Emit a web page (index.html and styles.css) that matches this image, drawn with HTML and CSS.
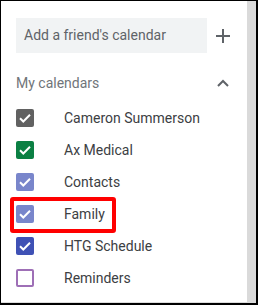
FILE: index.html
```html
<!DOCTYPE html>
<html lang="en">

<head>
    <meta charset="UTF-8" />
    <meta name="viewport" content="width=device-width, initial-scale=1.0" />
    <title>Calendars</title>
    <link rel="stylesheet" href="styles.css">
</head>

<body>
    <div class="frame">
        <div class="panel">
            <div class="search-row">
                <div class="search-box">Add a friend's calendar</div>
                <span class="icon-btn">
                    <svg width="14" height="14" viewBox="0 0 14 14">
                        <path d="M7 0v14M0 7h14" stroke="#5f6368" stroke-width="2" fill="none" />
                    </svg>
                </span>
            </div>
            <div class="section-head">
                <span class="section-title">My calendars</span>
                <span class="icon-btn">
                    <svg width="12" height="8" viewBox="0 0 12 8">
                        <path d="M1 7l5-5 5 5" stroke="#5f6368" stroke-width="2" fill="none" />
                    </svg>
                </span>
            </div>
            <ul class="cal-list">
                <li><span class="box" style="background:#616161"><svg class="tick" viewBox="0 0 18 18"><path d="M4 9.2l3.3 3.3L14 5.8" /></svg></span>Cameron Summerson</li>
                <li><span class="box" style="background:#0b8043"><svg class="tick" viewBox="0 0 18 18"><path d="M4 9.2l3.3 3.3L14 5.8" /></svg></span>Ax Medical</li>
                <li><span class="box" style="background:#7986cb"><svg class="tick" viewBox="0 0 18 18"><path d="M4 9.2l3.3 3.3L14 5.8" /></svg></span>Contacts</li>
                <li><span class="box" style="background:#7986cb"><svg class="tick" viewBox="0 0 18 18"><path d="M4 9.2l3.3 3.3L14 5.8" /></svg></span>Family</li>
                <li><span class="box" style="background:#3f51b5"><svg class="tick" viewBox="0 0 18 18"><path d="M4 9.2l3.3 3.3L14 5.8" /></svg></span>HTG Schedule</li>
                <li><span class="box empty"></span>Reminders</li>
            </ul>
        </div>
        <div class="scrollbar"></div>
        <div class="highlight"></div>
    </div>
</body>

</html>
```

FILE: styles.css
```css
* {
    margin: 0;
    padding: 0;
    box-sizing: border-box;
}

body {
    font-family: Roboto, "Liberation Sans", sans-serif;
    font-size: 14px;
    background: #fff;
}

.frame {
    position: relative;
    width: 258px;
    height: 305px;
    display: flex;
    border-top: 1px solid #000;
    border-left: 1px solid #000;
    border-right: 2px solid #000;
    border-bottom: 2px solid #000;
    overflow: hidden;
}

.panel {
    flex: 1;
    padding: 17px 12px 0 15px;
    border-bottom: 1px solid #dcdcdc;
    overflow: hidden;
}

.scrollbar {
    width: 9px;
    background: #dadada;
}

.search-row {
    display: flex;
    align-items: center;
}

.search-box {
    width: 191px;
    height: 35px;
    line-height: 35px;
    padding-left: 8px;
    background: #f1f3f4;
    color: #5f6368;
    font-size: 14px;
}

.icon-btn {
    width: 24px;
    height: 24px;
    margin-left: 4px;
    display: flex;
    align-items: center;
    justify-content: center;
}

.section-head {
    display: flex;
    align-items: center;
    justify-content: space-between;
    height: 39px;
    margin-top: 10px;
}

.section-title {
    color: #70757a;
}

.cal-list {
    list-style-type: none;
}

.cal-list li {
    height: 32px;
    display: flex;
    align-items: center;
    color: #3c4043;
}

.box {
    width: 18px;
    height: 18px;
    border-radius: 2px;
    margin-right: 30px;
    display: flex;
}

.box.empty {
    border: 2px solid #9e6fb6;
}

.tick {
    width: 18px;
    height: 18px;
    fill: none;
    stroke: #fff;
    stroke-width: 2;
}

.highlight {
    position: absolute;
    left: 9px;
    top: 196px;
    width: 106px;
    height: 36px;
    border: 4px solid #f00;
    border-radius: 3px;
}
```
